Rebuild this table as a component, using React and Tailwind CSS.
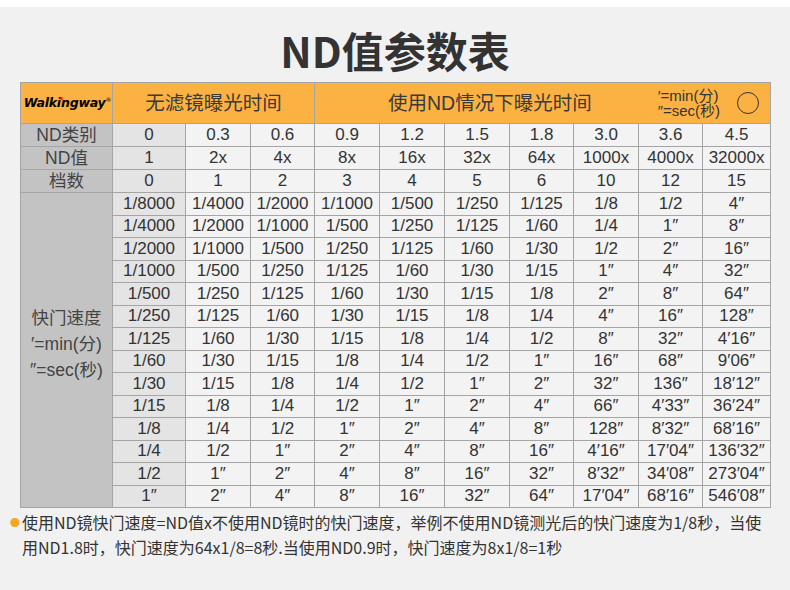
import React from "react";

const ndTypes = ["0", "0.3", "0.6", "0.9", "1.2", "1.5", "1.8", "3.0", "3.6", "4.5"];
const ndValues = ["1", "2x", "4x", "8x", "16x", "32x", "64x", "1000x", "4000x", "32000x"];
const stops = ["0", "1", "2", "3", "4", "5", "6", "10", "12", "15"];

const shutter = [
  ["1/8000", "1/4000", "1/2000", "1/1000", "1/500", "1/250", "1/125", "1/8", "1/2", "4″"],
  ["1/4000", "1/2000", "1/1000", "1/500", "1/250", "1/125", "1/60", "1/4", "1″", "8″"],
  ["1/2000", "1/1000", "1/500", "1/250", "1/125", "1/60", "1/30", "1/2", "2″", "16″"],
  ["1/1000", "1/500", "1/250", "1/125", "1/60", "1/30", "1/15", "1″", "4″", "32″"],
  ["1/500", "1/250", "1/125", "1/60", "1/30", "1/15", "1/8", "2″", "8″", "64″"],
  ["1/250", "1/125", "1/60", "1/30", "1/15", "1/8", "1/4", "4″", "16″", "128″"],
  ["1/125", "1/60", "1/30", "1/15", "1/8", "1/4", "1/2", "8″", "32″", "4′16″"],
  ["1/60", "1/30", "1/15", "1/8", "1/4", "1/2", "1″", "16″", "68″", "9′06″"],
  ["1/30", "1/15", "1/8", "1/4", "1/2", "1″", "2″", "32″", "136″", "18′12″"],
  ["1/15", "1/8", "1/4", "1/2", "1″", "2″", "4″", "66″", "4′33″", "36′24″"],
  ["1/8", "1/4", "1/2", "1″", "2″", "4″", "8″", "128″", "8′32″", "68′16″"],
  ["1/4", "1/2", "1″", "2″", "4″", "8″", "16″", "4′16″", "17′04″", "136′32″"],
  ["1/2", "1″", "2″", "4″", "8″", "16″", "32″", "8′32″", "34′08″", "273′04″"],
  ["1″", "2″", "4″", "8″", "16″", "32″", "64″", "17′04″", "68′16″", "546′08″"],
];

const colWidths = [92, 73, 65, 64, 65, 65, 65, 64, 65, 64, 68];

const cell = "border border-[#a5a5a5] text-center p-0 whitespace-nowrap leading-[20px]";
const labelCell = `${cell} bg-[#c3c3c3] text-[#444] text-[17.5px]`;

const DataCells = ({ values }) =>
  values.map((v, i) => (
    <td
      key={i}
      className={`${cell} text-[17px] text-[#333] ${i === 0 ? "bg-[#e4e4e4]" : "bg-[#f3f3f3]"}`}
    >
      {v}
    </td>
  ));

const Logo = () => (
  <div className="flex items-start justify-center pl-[2px] font-['DejaVu_Sans',sans-serif] font-bold italic text-[12.5px] leading-[14px] text-black tracking-[-0.2px]">
    <span>
      Walk
      <span className="relative">
        i
        <span className="absolute left-[3px] top-[2px] w-[3px] h-[3px] rounded-full bg-[#e0282a]" />
      </span>
      ngway
    </span>
    <span className="text-[6px] leading-[8px] not-italic font-normal">®</span>
  </div>
);

export default function App() {
  return (
    <div className="w-[790px] h-[590px] bg-[#f1f1f1] border-t-[7px] border-white font-['Liberation_Sans','Noto_Sans_CJK_SC',sans-serif] overflow-hidden">
      {/* Title */}
      <h1 className="text-center text-[42px] leading-[42px] font-bold text-[#333] pt-[22px] h-[75px] font-['Noto_Sans_CJK_SC',sans-serif]">
        ND值参数表
      </h1>

      {/* Table */}
      <table className="ml-[20px] w-[750px] table-fixed border-collapse">
        <colgroup>
          {colWidths.map((w, i) => (
            <col key={i} style={{ width: w }} />
          ))}
        </colgroup>
        <tbody>
          <tr className="h-[41px] bg-[#fbb243]">
            <td className={cell}>
              <Logo />
            </td>
            <td colSpan={3} className={`${cell} text-[19.5px] text-[#3a3a3a] leading-[24px]`}>
              无滤镜曝光时间
            </td>
            <td colSpan={7} className={`${cell} text-left`}>
              <div className="flex items-center">
                <span className="pl-[73px] text-[19.5px] leading-[24px] text-[#3a3a3a]">使用ND情况下曝光时间</span>
                <div className="ml-auto flex flex-col text-[15px] leading-[15px] text-[#333]">
                  <span>′=min(分)</span>
                  <span>″=sec(秒)</span>
                </div>
                <div className="ml-[17px] mr-[11px] w-[22px] h-[22px] rounded-full border border-[#333]" />
              </div>
            </td>
          </tr>
          <tr className="h-[23px]">
            <td className={labelCell}>ND类别</td>
            <DataCells values={ndTypes} />
          </tr>
          <tr className="h-[23px]">
            <td className={labelCell}>ND值</td>
            <DataCells values={ndValues} />
          </tr>
          <tr className="h-[23px]">
            <td className={labelCell}>档数</td>
            <DataCells values={stops} />
          </tr>
          {shutter.map((row, r) => (
            <tr key={r} className="h-[22.5px]">
              {r === 0 && (
                <td rowSpan={shutter.length} className={`${labelCell} align-middle`}>
                  <div className="flex flex-col items-center leading-[26px] pb-[12px]">
                    <span>快门速度</span>
                    <span>′=min(分)</span>
                    <span>″=sec(秒)</span>
                  </div>
                </td>
              )}
              <DataCells values={row} />
            </tr>
          ))}
        </tbody>
      </table>

      {/* Footnote */}
      <div className="flex pl-[10px] pt-[2px] text-[16px] leading-[25px] text-[#333] font-['Noto_Sans_CJK_SC',sans-serif]">
        <span className="w-[12px] text-[#f5a623] text-[10px]">●</span>
        <p className="whitespace-nowrap">
          使用ND镜快门速度=ND值x不使用ND镜时的快门速度，举例不使用ND镜测光后的快门速度为1/8秒，当使
          <br />
          用ND1.8时，快门速度为64x1/8=8秒.当使用ND0.9时，快门速度为8x1/8=1秒
        </p>
      </div>
    </div>
  );
}
